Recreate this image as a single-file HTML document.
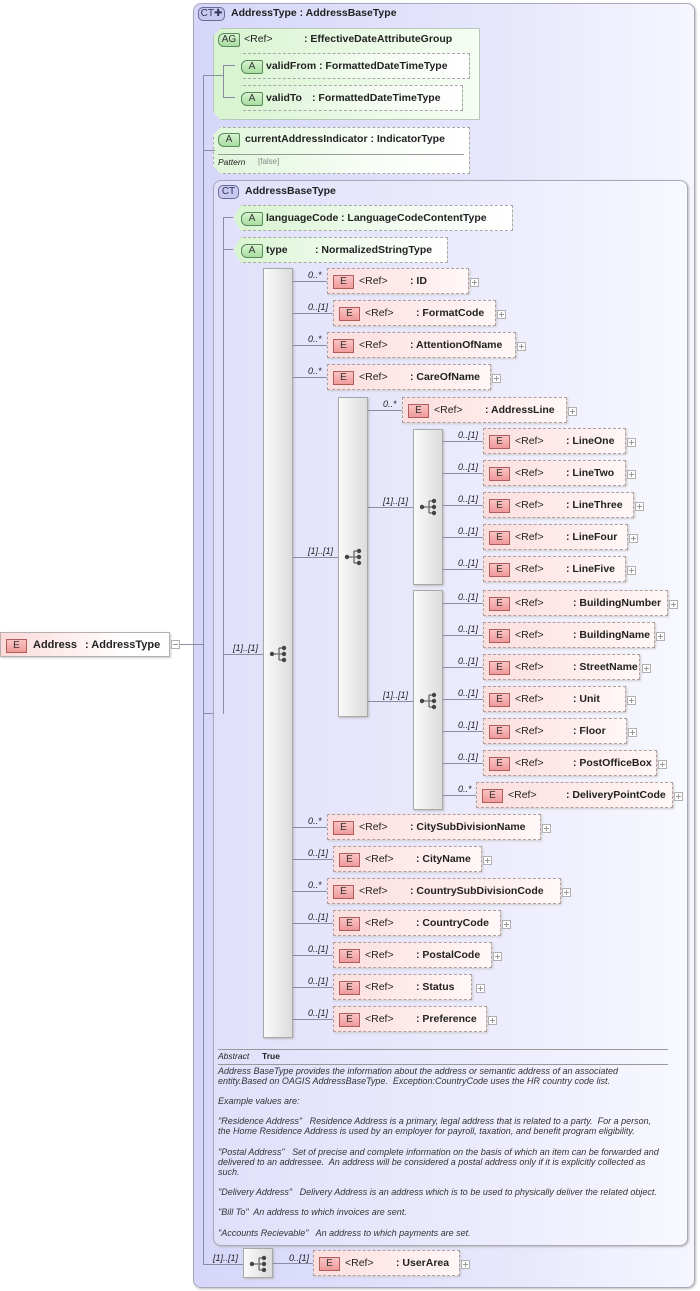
<!DOCTYPE html>
<html><head><meta charset="utf-8"><style>
*{margin:0;padding:0;box-sizing:border-box}
body{width:700px;height:1291px;background:#fff;position:relative;overflow:hidden;font-family:"Liberation Sans",sans-serif;color:#222}
div,span,i{position:absolute}
i{font-style:normal}
.ct{border:1px solid #a8a8b8;border-radius:8px;box-shadow:1px 1px 2px #bbb}
.ctb{height:14px;border:1px solid #6a6a9a;border-radius:5px;background:#c8c8f0;font-size:10px;line-height:12px;text-align:center;color:#335}
.t{font-size:10.5px;font-weight:bold;white-space:nowrap}
.e{height:26px;border:1px dashed #b0a0a0;background:linear-gradient(to right,#fcdede,#fff1f1 80%,#fff8f8);box-shadow:1px 1px 2px #ccc;font-size:10.5px;font-weight:bold;line-height:24px;white-space:nowrap}
.e.s{border-style:solid}
.b{left:5px;top:6px;width:21px;height:14px;border:1px solid #b25b5b;background:linear-gradient(#fbc4c4,#ee9a9a);font-weight:normal;font-size:10px;line-height:12px;text-align:center;color:#333}
.r{left:31px;font-weight:normal}
.a{height:26px;border:1px dashed #a8a8a8;background:linear-gradient(to right,#d8f4d0,#f4fcf2 60%,#fff);font-size:10.5px;font-weight:bold;line-height:24px;white-space:nowrap;clip-path:polygon(8px 0,100% 0,100% 100%,8px 100%,0 50%)}
.ab{left:7px;top:6px;width:22px;height:14px;border:1px solid #5a8a5a;border-radius:6px 2px 2px 6px;background:linear-gradient(#d6f4d0,#a8dca0);font-weight:normal;font-size:10px;line-height:12px;text-align:center;color:#333}
.p{width:9px;height:9px;border:1px solid #b0b0b0;background:#fff}
.p:before{content:"";position:absolute;left:1px;top:3px;width:5px;height:1px;background:#999}
.p:after{content:"";position:absolute;left:3px;top:1px;width:1px;height:5px;background:#999}
.p.m:after{display:none}
.sq{border:1px solid #a8a8a8;background:linear-gradient(to right,#fafafa,#dcdcdc);box-shadow:1px 1px 2px #bbb}
.c{font-size:9px;font-style:italic;color:#222;white-space:nowrap}
.h{height:1px;background:#8c8ca0}
.v{width:1px;background:#8c8ca0}
.d{font-size:9px;font-style:italic;color:#333;line-height:10px;white-space:nowrap;left:218px}
svg{position:absolute}
</style></head><body>

<div class="ct" style="left:193px;top:3px;width:502px;height:1285px;background:linear-gradient(to right,#d6d6fa,#e6e6fc 60%,#f6f6ff)"></div>
<div class="ctb" style="left:198px;top:7px;width:27px">CT✚</div>
<div class="t" style="left:231px;top:7px">AddressType : AddressBaseType</div>

<div style="left:213px;top:28px;width:267px;height:92px;background:linear-gradient(to right,#d8f4d0,#eefbea 70%,#f6fdf4);border:1px solid #b8c8b8;box-shadow:2px 2px 2px #bbb;clip-path:polygon(8px 0,100% 0,100% 100%,8px 100%,0 calc(100% - 8px),0 8px)"></div>
<div class="ab" style="left:218px;top:33px;width:22px">AG</div>
<div class="t" style="left:244px;top:33px;font-weight:normal">&lt;Ref&gt;</div>
<div class="t" style="left:304px;top:33px">: EffectiveDateAttributeGroup</div>
<div class="a" style="left:233px;top:53px;width:237px"><i class="ab">A</i><span style="left:32px">validFrom</span><span style="left:85px">: FormattedDateTimeType</span></div>
<div class="a" style="left:233px;top:85px;width:230px"><i class="ab">A</i><span style="left:32px">validTo</span><span style="left:78px">: FormattedDateTimeType</span></div>
<div class="v" style="left:223px;top:65px;height:32px"></div>
<div class="h" style="left:223px;top:65px;width:12px"></div>
<div class="h" style="left:223px;top:97px;width:12px"></div>

<div style="left:213px;top:127px;width:257px;height:47px;border:1px dashed #a8a8a8;background:linear-gradient(to right,#e0f6da,#f8fdf6 60%,#fff);box-shadow:1px 1px 2px #ccc;clip-path:polygon(8px 0,100% 0,100% 100%,8px 100%,0 calc(100% - 8px),0 8px)"></div>
<div class="ab" style="left:218px;top:133px">A</div>
<div class="t" style="left:245px;top:133px">currentAddressIndicator : IndicatorType</div>
<div class="h" style="left:218px;top:154px;width:246px;background:#999"></div>
<div class="c" style="left:218px;top:157px;font-size:8.5px">Pattern</div>
<div class="c" style="left:258px;top:157px;font-size:8px;font-style:normal;color:#888">[false]</div>

<div class="h" style="left:178px;top:644px;width:25px"></div>
<div class="v" style="left:203px;top:75px;height:638px"></div>
<div class="h" style="left:203px;top:75px;width:20px"></div>
<div class="h" style="left:203px;top:150px;width:12px"></div>
<div class="h" style="left:203px;top:713px;width:21px"></div>
<div class="v" style="left:203px;top:713px;height:551px"></div>
<div class="h" style="left:203px;top:1264px;width:40px"></div>

<div class="ct" style="left:213px;top:180px;width:475px;height:1066px;background:linear-gradient(to right,#e0e0fb,#ececfd 60%,#f8f8ff)"></div>
<div class="ctb" style="left:218px;top:185px;width:21px">CT</div>
<div class="t" style="left:245px;top:185px">AddressBaseType</div>
<div class="v" style="left:223px;top:217px;height:497px"></div>
<div class="h" style="left:223px;top:217px;width:12px"></div>
<div class="h" style="left:223px;top:249px;width:12px"></div>
<div class="h" style="left:223px;top:654px;width:40px"></div>
<div class="c" style="left:233px;top:643px">[1]..[1]</div>
<div class="a" style="left:233px;top:205px;width:280px"><i class="ab">A</i><span style="left:32px">languageCode</span><span style="left:107px">: LanguageCodeContentType</span></div>
<div class="a" style="left:233px;top:237px;width:215px"><i class="ab">A</i><span style="left:32px">type</span><span style="left:81px">: NormalizedStringType</span></div>

<div class="sq" style="left:263px;top:268px;width:30px;height:770px"></div>
<svg style="left:269px;top:645px" width="20" height="18"><line x1="3" y1="9" x2="9" y2="9" stroke="#444"/><path d="M10 3V15M10 3H15M10 9H15M10 15H15" stroke="#444" fill="none"/><circle cx="3" cy="9" r="2.2" fill="#444"/><circle cx="15" cy="3" r="2.2" fill="#444"/><circle cx="15" cy="9" r="2.2" fill="#444"/><circle cx="15" cy="15" r="2.2" fill="#444"/></svg>

<div class="h" style="left:293px;top:281px;width:34px"></div><div class="c" style="left:308px;top:270px">0..*</div>
<div class="h" style="left:293px;top:313px;width:40px"></div><div class="c" style="left:308px;top:302px">0..[1]</div>
<div class="h" style="left:293px;top:345px;width:34px"></div><div class="c" style="left:308px;top:334px">0..*</div>
<div class="h" style="left:293px;top:377px;width:34px"></div><div class="c" style="left:308px;top:366px">0..*</div>
<div class="h" style="left:293px;top:557px;width:45px"></div><div class="c" style="left:308px;top:546px">[1]..[1]</div>
<div class="h" style="left:293px;top:827px;width:34px"></div><div class="c" style="left:308px;top:816px">0..*</div>
<div class="h" style="left:293px;top:859px;width:40px"></div><div class="c" style="left:308px;top:848px">0..[1]</div>
<div class="h" style="left:293px;top:891px;width:34px"></div><div class="c" style="left:308px;top:880px">0..*</div>
<div class="h" style="left:293px;top:923px;width:40px"></div><div class="c" style="left:308px;top:912px">0..[1]</div>
<div class="h" style="left:293px;top:955px;width:40px"></div><div class="c" style="left:308px;top:944px">0..[1]</div>
<div class="h" style="left:293px;top:987px;width:40px"></div><div class="c" style="left:308px;top:976px">0..[1]</div>
<div class="h" style="left:293px;top:1019px;width:40px"></div><div class="c" style="left:308px;top:1008px">0..[1]</div>

<div class="e" style="left:327px;top:268px;width:142px"><i class="b">E</i><span class="r">&lt;Ref&gt;</span><span style="left:82px">: ID</span></div><div class="p" style="left:470px;top:278px"></div>
<div class="e" style="left:333px;top:300px;width:163px"><i class="b">E</i><span class="r">&lt;Ref&gt;</span><span style="left:82px">: FormatCode</span></div><div class="p" style="left:497px;top:310px"></div>
<div class="e" style="left:327px;top:332px;width:189px"><i class="b">E</i><span class="r">&lt;Ref&gt;</span><span style="left:82px">: AttentionOfName</span></div><div class="p" style="left:517px;top:342px"></div>
<div class="e" style="left:327px;top:364px;width:164px"><i class="b">E</i><span class="r">&lt;Ref&gt;</span><span style="left:82px">: CareOfName</span></div><div class="p" style="left:492px;top:374px"></div>

<div class="sq" style="left:338px;top:397px;width:30px;height:320px"></div>
<svg style="left:344px;top:548px" width="20" height="18"><line x1="3" y1="9" x2="9" y2="9" stroke="#444"/><path d="M10 3V15M10 3H15M10 9H15M10 15H15" stroke="#444" fill="none"/><circle cx="3" cy="9" r="2.2" fill="#444"/><circle cx="15" cy="3" r="2.2" fill="#444"/><circle cx="15" cy="9" r="2.2" fill="#444"/><circle cx="15" cy="15" r="2.2" fill="#444"/></svg>
<div class="h" style="left:368px;top:410px;width:34px"></div><div class="c" style="left:383px;top:399px">0..*</div>
<div class="h" style="left:368px;top:507px;width:45px"></div><div class="c" style="left:383px;top:496px">[1]..[1]</div>
<div class="h" style="left:368px;top:701px;width:45px"></div><div class="c" style="left:383px;top:690px">[1]..[1]</div>
<div class="e" style="left:402px;top:397px;width:165px"><i class="b">E</i><span class="r">&lt;Ref&gt;</span><span style="left:82px">: AddressLine</span></div><div class="p" style="left:568px;top:407px"></div>

<div class="sq" style="left:413px;top:429px;width:30px;height:156px"></div>
<svg style="left:419px;top:498px" width="20" height="18"><line x1="3" y1="9" x2="9" y2="9" stroke="#444"/><path d="M10 3V15M10 3H15M10 9H15M10 15H15" stroke="#444" fill="none"/><circle cx="3" cy="9" r="2.2" fill="#444"/><circle cx="15" cy="3" r="2.2" fill="#444"/><circle cx="15" cy="9" r="2.2" fill="#444"/><circle cx="15" cy="15" r="2.2" fill="#444"/></svg>
<div class="h" style="left:443px;top:441px;width:40px"></div><div class="c" style="left:458px;top:430px">0..[1]</div>
<div class="h" style="left:443px;top:473px;width:40px"></div><div class="c" style="left:458px;top:462px">0..[1]</div>
<div class="h" style="left:443px;top:505px;width:40px"></div><div class="c" style="left:458px;top:494px">0..[1]</div>
<div class="h" style="left:443px;top:537px;width:40px"></div><div class="c" style="left:458px;top:526px">0..[1]</div>
<div class="h" style="left:443px;top:569px;width:40px"></div><div class="c" style="left:458px;top:558px">0..[1]</div>
<div class="e" style="left:483px;top:428px;width:143px"><i class="b">E</i><span class="r">&lt;Ref&gt;</span><span style="left:82px">: LineOne</span></div><div class="p" style="left:627px;top:438px"></div>
<div class="e" style="left:483px;top:460px;width:143px"><i class="b">E</i><span class="r">&lt;Ref&gt;</span><span style="left:82px">: LineTwo</span></div><div class="p" style="left:627px;top:470px"></div>
<div class="e" style="left:483px;top:492px;width:151px"><i class="b">E</i><span class="r">&lt;Ref&gt;</span><span style="left:82px">: LineThree</span></div><div class="p" style="left:635px;top:502px"></div>
<div class="e" style="left:483px;top:524px;width:145px"><i class="b">E</i><span class="r">&lt;Ref&gt;</span><span style="left:82px">: LineFour</span></div><div class="p" style="left:629px;top:534px"></div>
<div class="e" style="left:483px;top:556px;width:143px"><i class="b">E</i><span class="r">&lt;Ref&gt;</span><span style="left:82px">: LineFive</span></div><div class="p" style="left:627px;top:566px"></div>

<div class="sq" style="left:413px;top:590px;width:30px;height:220px"></div>
<svg style="left:419px;top:692px" width="20" height="18"><line x1="3" y1="9" x2="9" y2="9" stroke="#444"/><path d="M10 3V15M10 3H15M10 9H15M10 15H15" stroke="#444" fill="none"/><circle cx="3" cy="9" r="2.2" fill="#444"/><circle cx="15" cy="3" r="2.2" fill="#444"/><circle cx="15" cy="9" r="2.2" fill="#444"/><circle cx="15" cy="15" r="2.2" fill="#444"/></svg>
<div class="h" style="left:443px;top:603px;width:40px"></div><div class="c" style="left:458px;top:592px">0..[1]</div>
<div class="h" style="left:443px;top:635px;width:40px"></div><div class="c" style="left:458px;top:624px">0..[1]</div>
<div class="h" style="left:443px;top:667px;width:40px"></div><div class="c" style="left:458px;top:656px">0..[1]</div>
<div class="h" style="left:443px;top:699px;width:40px"></div><div class="c" style="left:458px;top:688px">0..[1]</div>
<div class="h" style="left:443px;top:731px;width:40px"></div><div class="c" style="left:458px;top:720px">0..[1]</div>
<div class="h" style="left:443px;top:763px;width:40px"></div><div class="c" style="left:458px;top:752px">0..[1]</div>
<div class="h" style="left:443px;top:795px;width:33px"></div><div class="c" style="left:458px;top:784px">0..*</div>
<div class="e" style="left:483px;top:590px;width:185px"><i class="b">E</i><span class="r">&lt;Ref&gt;</span><span style="left:89px">: BuildingNumber</span></div><div class="p" style="left:669px;top:600px"></div>
<div class="e" style="left:483px;top:622px;width:172px"><i class="b">E</i><span class="r">&lt;Ref&gt;</span><span style="left:89px">: BuildingName</span></div><div class="p" style="left:656px;top:632px"></div>
<div class="e" style="left:483px;top:654px;width:157px"><i class="b">E</i><span class="r">&lt;Ref&gt;</span><span style="left:89px">: StreetName</span></div><div class="p" style="left:642px;top:664px"></div>
<div class="e" style="left:483px;top:686px;width:143px"><i class="b">E</i><span class="r">&lt;Ref&gt;</span><span style="left:89px">: Unit</span></div><div class="p" style="left:627px;top:696px"></div>
<div class="e" style="left:483px;top:718px;width:144px"><i class="b">E</i><span class="r">&lt;Ref&gt;</span><span style="left:89px">: Floor</span></div><div class="p" style="left:628px;top:728px"></div>
<div class="e" style="left:483px;top:750px;width:174px"><i class="b">E</i><span class="r">&lt;Ref&gt;</span><span style="left:89px">: PostOfficeBox</span></div><div class="p" style="left:658px;top:760px"></div>
<div class="e" style="left:476px;top:782px;width:197px"><i class="b">E</i><span class="r">&lt;Ref&gt;</span><span style="left:89px">: DeliveryPointCode</span></div><div class="p" style="left:674px;top:792px"></div>

<div class="e" style="left:327px;top:814px;width:214px"><i class="b">E</i><span class="r">&lt;Ref&gt;</span><span style="left:82px">: CitySubDivisionName</span></div><div class="p" style="left:542px;top:824px"></div>
<div class="e" style="left:333px;top:846px;width:149px"><i class="b">E</i><span class="r">&lt;Ref&gt;</span><span style="left:82px">: CityName</span></div><div class="p" style="left:483px;top:856px"></div>
<div class="e" style="left:327px;top:878px;width:234px"><i class="b">E</i><span class="r">&lt;Ref&gt;</span><span style="left:82px">: CountrySubDivisionCode</span></div><div class="p" style="left:562px;top:888px"></div>
<div class="e" style="left:333px;top:910px;width:168px"><i class="b">E</i><span class="r">&lt;Ref&gt;</span><span style="left:82px">: CountryCode</span></div><div class="p" style="left:502px;top:920px"></div>
<div class="e" style="left:333px;top:942px;width:159px"><i class="b">E</i><span class="r">&lt;Ref&gt;</span><span style="left:82px">: PostalCode</span></div><div class="p" style="left:493px;top:952px"></div>
<div class="e" style="left:333px;top:974px;width:139px"><i class="b">E</i><span class="r">&lt;Ref&gt;</span><span style="left:82px">: Status</span></div><div class="p" style="left:476px;top:984px"></div>
<div class="e" style="left:333px;top:1006px;width:154px"><i class="b">E</i><span class="r">&lt;Ref&gt;</span><span style="left:82px">: Preference</span></div><div class="p" style="left:488px;top:1016px"></div>

<div class="h" style="left:218px;top:1049px;width:450px;background:#999"></div>
<div class="c" style="left:218px;top:1051px;font-size:8.5px">Abstract</div>
<div style="left:262px;top:1051px;font-size:8.5px;font-weight:bold">True</div>
<div class="h" style="left:218px;top:1064px;width:450px;background:#999"></div>
<div class="d" style="top:1066px">Address BaseType provides the information about the address or semantic address of an associated<br>entity.Based on OAGIS AddressBaseType.&nbsp; Exception:CountryCode uses the HR country code list.</div>
<div class="d" style="top:1096px">Example values are:</div>
<div class="d" style="top:1116px">"Residence Address"&nbsp;&nbsp; Residence Address is a primary, legal address that is related to a party.&nbsp; For a person,<br>the Home Residence Address is used by an employer for payroll, taxation, and benefit program eligibility.</div>
<div class="d" style="top:1147px">"Postal Address"&nbsp;&nbsp; Set of precise and complete information on the basis of which an item can be forwarded and<br>delivered to an addressee.&nbsp; An address will be considered a postal address only if it is explicitly collected as<br>such.</div>
<div class="d" style="top:1187px">"Delivery Address"&nbsp;&nbsp; Delivery Address is an address which is to be used to physically deliver the related object.</div>
<div class="d" style="top:1207px">"Bill To"&nbsp; An address to which invoices are sent.</div>
<div class="d" style="top:1228px">"Accounts Recievable"&nbsp;&nbsp; An address to which payments are set.</div>

<div class="c" style="left:213px;top:1253px">[1]..[1]</div>
<div class="sq" style="left:243px;top:1248px;width:30px;height:30px"></div>
<svg style="left:249px;top:1255px" width="20" height="18"><line x1="3" y1="9" x2="9" y2="9" stroke="#444"/><path d="M10 3V15M10 3H15M10 9H15M10 15H15" stroke="#444" fill="none"/><circle cx="3" cy="9" r="2.2" fill="#444"/><circle cx="15" cy="3" r="2.2" fill="#444"/><circle cx="15" cy="9" r="2.2" fill="#444"/><circle cx="15" cy="15" r="2.2" fill="#444"/></svg>
<div class="h" style="left:273px;top:1263px;width:40px"></div><div class="c" style="left:289px;top:1253px">0..[1]</div>
<div class="e" style="left:313px;top:1250px;width:147px"><i class="b">E</i><span class="r">&lt;Ref&gt;</span><span style="left:82px">: UserArea</span></div><div class="p" style="left:461px;top:1260px"></div>

<div class="e s" style="left:0;top:632px;width:170px;height:25px;border-color:#b8b0b0;background:linear-gradient(to right,#fcdada,#fff 75%);font-size:11px"><i class="b">E</i><span style="left:32px">Address</span><span style="left:84px">: AddressType</span></div>
<div class="p m" style="left:171px;top:640px"></div>
</body></html>
